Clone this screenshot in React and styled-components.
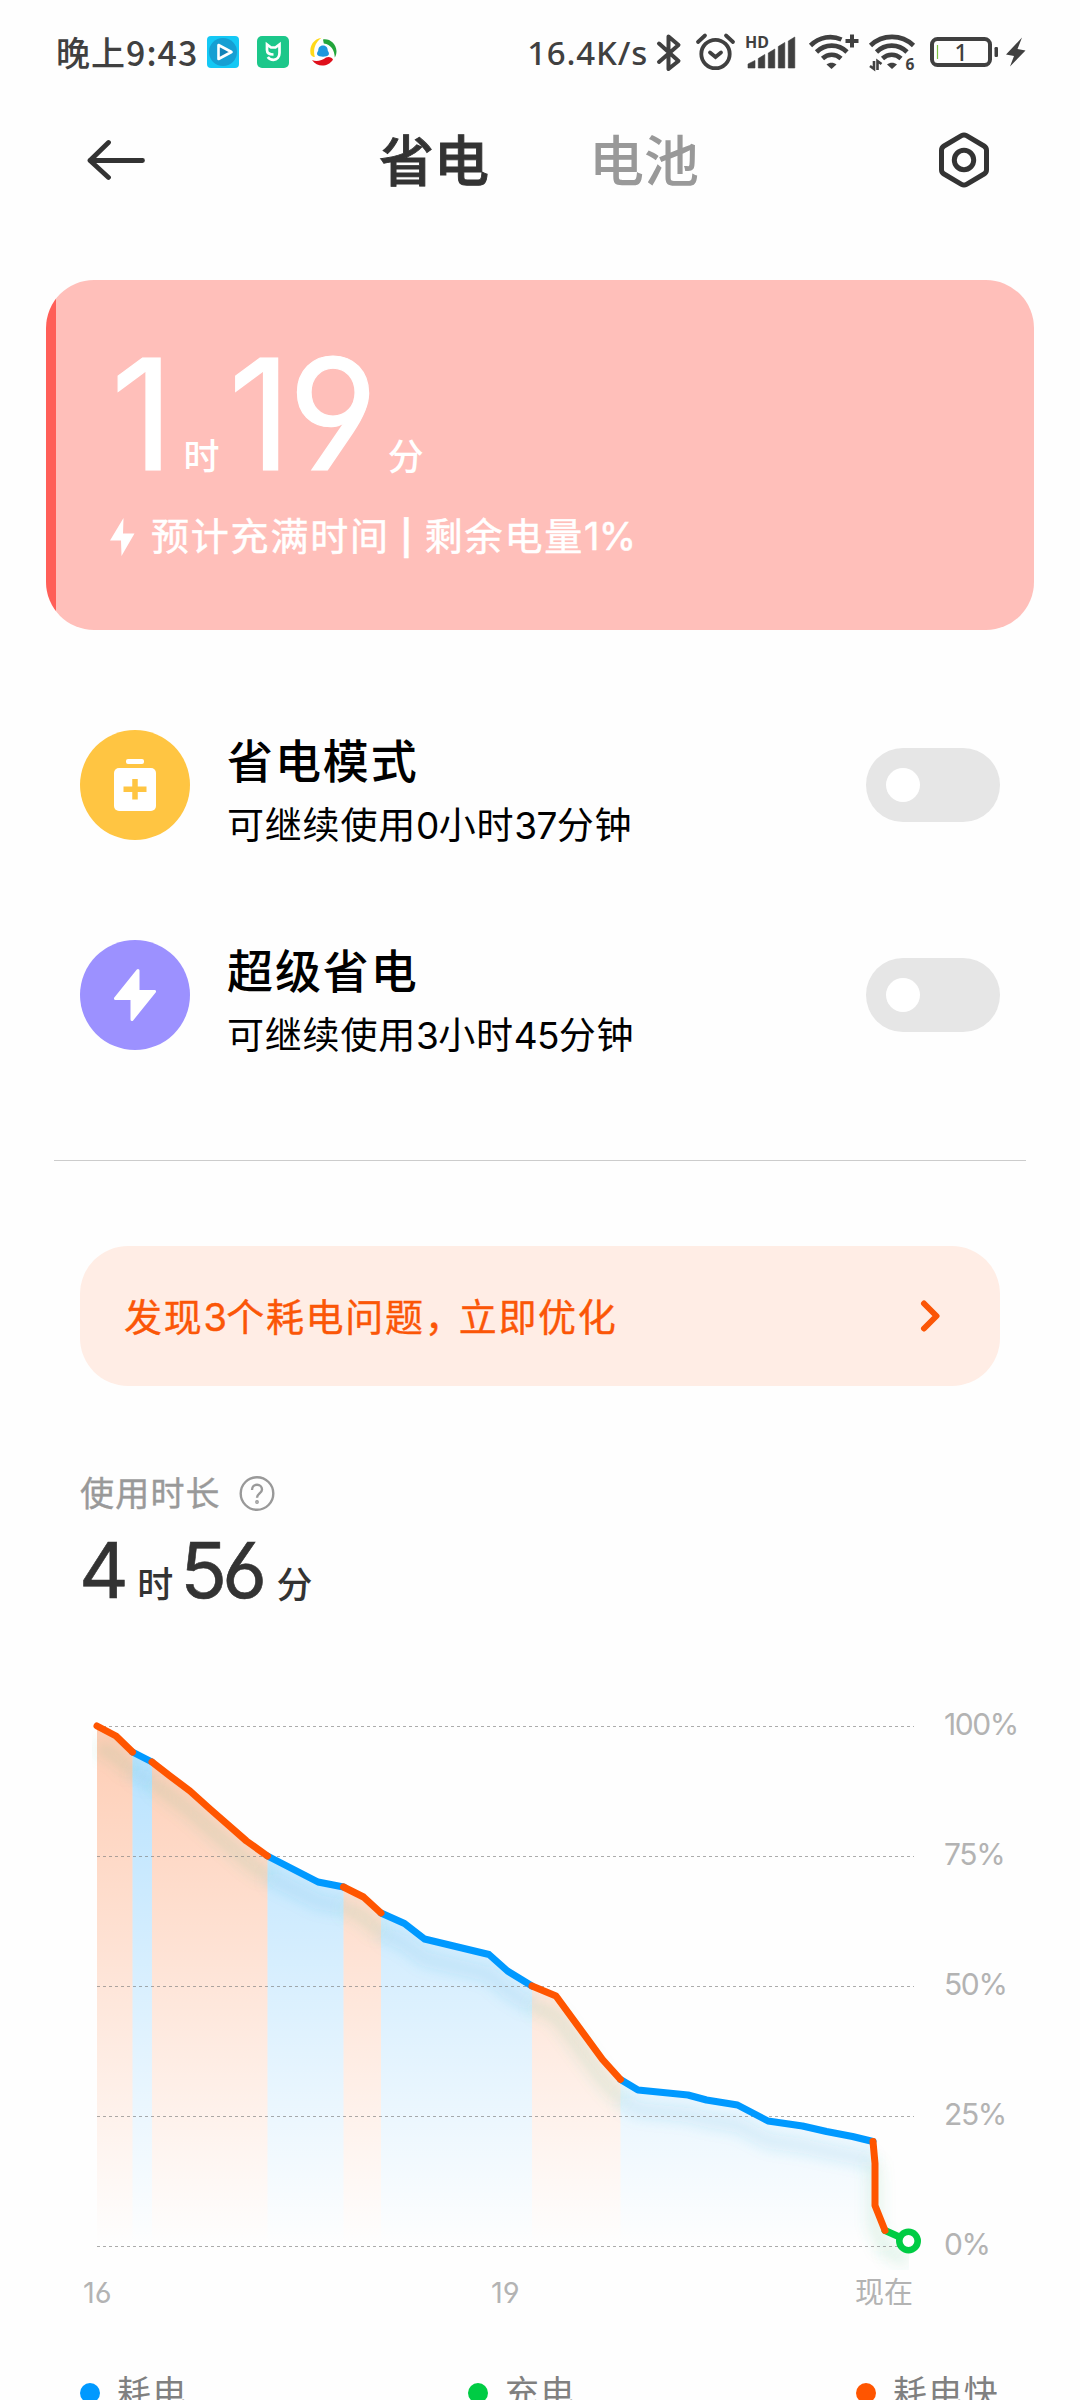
import React, { useState } from "react";
import styled, { createGlobalStyle } from "styled-components";

const GlobalStyle = createGlobalStyle`
  * {
    box-sizing: border-box;
  }

  body {
    margin: 0;
    background: #fefefe;
  }
`;

const Page = styled.div`
  width: 1080px;
  height: 2400px;
  overflow: hidden;
  background: #fefefe;
  color: #000;
  font-family: Inter, "Noto Sans CJK SC", sans-serif;
  font-feature-settings: "cv03", "cv04";
  white-space: nowrap;
`;

/* status bar */

const StatusBar = styled.div`
  display: flex;
  justify-content: space-between;
  align-items: center;
  height: 106px;
  padding: 0 54px 0 56px;
  color: #404040;
  font-family: "Noto Sans CJK SC", sans-serif;
  font-size: 34px;
  font-weight: 500;
  line-height: 40px;
`;

const StatusGroup = styled.div`
  display: flex;
  align-items: center;
`;

const Clock = styled.span`
  width: 151px;
  margin-top: -3px;
  letter-spacing: 1px;
`;

const NetSpeed = styled.span`
  font-family: "Noto Sans", sans-serif;
  font-size: 33px;
  letter-spacing: 0.8px;
`;

const AppIcon = styled.svg`
  width: 32px;
  height: 32px;
  margin: -2px 18px 0 0;
`;

const StatusIcon = styled.svg`
  width: ${(p) => p.$width}px;
  height: 40px;
  margin-left: ${(p) => p.$gap}px;
  overflow: visible;
`;

/* header */

const Header = styled.header`
  display: flex;
  justify-content: space-between;
  align-items: center;
  height: 108px;
  padding: 0 91px 0 87px;
`;

const Tabs = styled.nav`
  display: flex;
  gap: 100px;
  margin: 2px 6px 0 0;
`;

const Tab = styled.span`
  color: ${(p) => (p.$active ? "#333" : "#999")};
  font-size: 55px;
  font-weight: 500;
  line-height: 64px;
  -webkit-text-stroke: ${(p) => (p.$active ? 0.9 : 0)}px currentColor;
`;

/* battery card */

const BatteryCard = styled.section`
  height: 350px;
  margin: 66px 46px 0;
  padding: 57px 0 0 65px;
  border-radius: 48px;
  background: linear-gradient(to right, #ff5f58 10px, #ffbfba 10px);
  color: #fff;
`;

const TimeRow = styled.div`
  display: flex;
  align-items: baseline;
  height: ${(p) => p.$size}px;
`;

const BigNumber = styled.span`
  font-size: ${(p) => p.$size}px;
  font-weight: 400;
  line-height: 1;
  letter-spacing: ${(p) => p.$tracking}em;
  -webkit-text-stroke: ${(p) => p.$size / 130}px currentColor;
`;

const Unit = styled.span`
  margin: 0 ${(p) => p.$after || 0}px 0 ${(p) => p.$before}px;
  font-size: 36px;
  font-weight: 500;
  line-height: 1;
`;

const CardNote = styled.div`
  display: flex;
  align-items: center;
  gap: 16px;
  margin: 21px 0 0 -1px;
  font-size: 38px;
  line-height: 48px;
  letter-spacing: 1.8px;
  word-spacing: -2px;
  -webkit-text-stroke: 0.5px currentColor;
`;

const Bar = styled.span`
  font-size: 34px;
  font-weight: 600;
`;

/* latin digits sit tighter than the hanzi around them */
const Num = styled.span`
  letter-spacing: -0.7px;
`;

/* saving modes */

const ModeList = styled.div`
  display: flex;
  flex-direction: column;
  gap: 100px;
  padding: 100px 80px 110px;
`;

const ModeRow = styled.div`
  display: flex;
  align-items: center;
  height: 110px;
`;

const ModeIcon = styled.div`
  display: flex;
  align-items: center;
  justify-content: center;
  width: 110px;
  height: 110px;
  border-radius: 50%;
  background: ${(p) => p.$color};
`;

const ModeText = styled.div`
  flex: 1;
  padding: 9px 0 0 37px;
`;

const ModeTitle = styled.div`
  font-size: 46px;
  font-weight: 500;
  line-height: 64px;
  letter-spacing: 1.9px;
`;

const ModeHint = styled.div`
  margin-top: 9px;
  font-size: 37px;
  line-height: 48px;
  letter-spacing: 0.8px;
`;

const Toggle = styled.button`
  display: flex;
  align-items: center;
  justify-content: ${(p) => (p.$on ? "flex-end" : "flex-start")};
  width: 134px;
  height: 74px;
  padding: 0 20px;
  border: 0;
  border-radius: 37px;
  background: ${(p) => (p.$on ? "#0d84ff" : "#e6e6e6")};
`;

const Knob = styled.span`
  width: 34px;
  height: 34px;
  border-radius: 50%;
  background: #fff;
`;

const Divider = styled.hr`
  height: 1px;
  margin: 0 54px;
  border: 0;
  background: #ccc;
`;

const Banner = styled.div`
  display: flex;
  align-items: center;
  justify-content: space-between;
  height: 140px;
  margin: 85px 80px 0;
  padding: 1px 59px 0 44px;
  border-radius: 48px;
  background: #ffede5;
  color: #fb5607;
  font-size: 38px;
  line-height: 48px;
  letter-spacing: 1.7px;
  -webkit-text-stroke: 0.4px currentColor;
`;

const Comma = styled.span`
  letter-spacing: -4px;
`;

/* usage */

const UsageLabel = styled.div`
  display: flex;
  align-items: center;
  gap: 18px;
  margin: 88px 0 18px 80px;
  color: #999;
  font-size: 34px;
  line-height: 40px;
  letter-spacing: 1.2px;
  -webkit-text-stroke: 0.4px currentColor;
`;

const UsageValue = styled.div`
  padding-left: 79px;
  color: #333;
`;

const ChartBox = styled.div`
  display: flex;
  margin: 90px 0 0 80px;
`;

const Scale = styled.div`
  display: flex;
  flex-direction: column;
  gap: 90px;
  padding: 4px 0 0 14px;
  color: #b3b3b3;
  font-size: 30px;
  line-height: 40px;
  letter-spacing: -1.4px;
`;

const Hours = styled.div`
  display: grid;
  grid-template-columns: 408px 364px auto;
  padding: 1px 0 0 83px;
  color: #b3b3b3;
  font-size: 29px;
  line-height: 44px;
`;

const Legend = styled.div`
  display: grid;
  grid-template-columns: repeat(3, 388px);
  margin: 54px 0 0 80px;
`;

const LegendItem = styled.div`
  display: flex;
  align-items: center;
  gap: 17px;
  color: #808080;
  font-size: 34px;
  line-height: 48px;
  letter-spacing: 1.4px;

  &::before {
    content: "";
    width: 20px;
    height: 20px;
    border-radius: 50%;
    background: ${(p) => p.$color};
  }
`;

const BLUE = "#0099ff";
const ORANGE = "#ff5500";
const GREEN = "#00cc44";

// every run starts where the previous one stopped
const runs = [
  { kind: "fast", points: [[97, 1726], [116, 1736], [132.5, 1752]] },
  { kind: "drain", points: [[132.5, 1752], [152, 1762]] },
  {
    kind: "fast",
    points: [[152, 1762], [170, 1776], [190, 1791], [210, 1809], [246.5, 1841], [267.5, 1856]],
  },
  { kind: "drain", points: [[267.5, 1856], [318, 1882], [343.5, 1887]] },
  { kind: "fast", points: [[343.5, 1887], [363.5, 1897], [381, 1913]] },
  {
    kind: "drain",
    points: [[381, 1913], [404.5, 1923.5], [424.5, 1939], [489, 1954.5], [507.5, 1971], [532, 1986]],
  },
  { kind: "fast", points: [[532, 1986], [556, 1996], [602.5, 2059.5], [620.5, 2079.5]] },
  {
    kind: "drain",
    points: [
      [620.5, 2079.5], [638, 2090], [688, 2095], [706.5, 2100], [737.5, 2105],
      [768, 2121], [802.5, 2126], [826.5, 2131.5], [852.5, 2136.5], [873, 2141.5],
    ],
  },
  { kind: "fast", points: [[873, 2141.5], [875, 2163.5], [875, 2205.5], [885, 2230.5]] },
  { kind: "charge", points: [[885, 2230.5], [908.5, 2241]] },
];

const colors = { fast: ORANGE, drain: BLUE, charge: GREEN };

const toPoints = (points) => points.map((p) => p.join(",")).join(" ");

const area = ({ points }) =>
  toPoints([[points[0][0], 2246], ...points, [points[points.length - 1][0], 2246]]);

const BatteryChart = () => (
  <svg width="850" height="570" viewBox="80 1700 850 570">
    <defs>
      {Object.keys(colors).map((kind) => (
        <linearGradient
          key={kind}
          id={kind}
          gradientUnits="userSpaceOnUse"
          x1="0"
          y1="1726"
          x2="0"
          y2="2246"
        >
          <stop offset="0" stopColor={colors[kind]} stopOpacity="0.29" />
          <stop offset="1" stopColor={colors[kind]} stopOpacity="0" />
        </linearGradient>
      ))}
      <filter id="glow" filterUnits="userSpaceOnUse" x="80" y="1700" width="850" height="570">
        <feGaussianBlur stdDeviation="7" />
      </filter>
      <clipPath id="plot">
        <rect x="92" y="1700" width="817" height="570" />
      </clipPath>
    </defs>
    {runs.map((run, i) => (
      <polygon key={i} points={area(run)} fill={`url(#${run.kind})`} />
    ))}
    <g clipPath="url(#plot)">
      {runs.map((run, i) => (
        <polyline
          key={i}
          points={toPoints(run.points)}
          transform="translate(0 20)"
          fill="none"
          stroke={run.kind === "drain" ? "#3aa5d8" : "#45b878"}
          strokeOpacity="0.14"
          strokeWidth="14"
          strokeLinejoin="round"
          filter="url(#glow)"
        />
      ))}
    </g>
    {[0, 1, 2, 3, 4].map((n) => (
      <line
        key={n}
        x1="97"
        x2="914"
        y1={1726.5 + n * 130}
        y2={1726.5 + n * 130}
        stroke="#808080"
        strokeOpacity="0.65"
        strokeDasharray="3 3"
      />
    ))}
    {["charge", "drain", "fast"].map((kind) =>
      runs
        .filter((run) => run.kind === kind)
        .map((run) => (
          <polyline
            key={run.points[0][0]}
            points={toPoints(run.points)}
            fill="none"
            stroke={colors[kind]}
            strokeWidth="7"
            strokeLinecap="round"
            strokeLinejoin="round"
          />
        ))
    )}
    <circle cx="908.5" cy="2241" r="9.2" fill="#fff" stroke={GREEN} strokeWidth="6.6" />
  </svg>
);

const PlayerIcon = () => (
  <AppIcon viewBox="0 0 32 32">
    <rect width="32" height="32" rx="4" fill="#14c8f5" />
    <circle cx="16" cy="16" r="14" fill="#169fd3" />
    <path d="M11.5 9v14l13-7z" fill="#1483b8" stroke="#fff" strokeWidth="2.6" strokeLinejoin="round" />
  </AppIcon>
);

const HomeIcon = () => (
  <AppIcon viewBox="0 0 32 32">
    <rect width="32" height="32" rx="5" fill="#1cc78a" />
    <path
      d="M16.5 18.500c-4.500 0-6.500-1.800-6.500-4.500V8.500l4 3h4.500l4-3V17c0 4-2.500 6.800-6 6.800-2.500 0-4.500-1-5.700-2.800"
      fill="none"
      stroke="#fff"
      strokeWidth="2.7"
    />
  </AppIcon>
);

const RingIcon = () => (
  <AppIcon viewBox="0 0 32 32">
    <path d="M14.500 1.800C7 3 2 9.500 3.500 18c.8 2 3 3.500 4.300 2.800C6 14 7.500 7 14.500 1.800z" fill="#ffd91a" />
    <path d="M16 3.500c6.500-1.200 13 4 13.500 11.500 0 3-.7 5-1.700 6.500C27.500 14 24 8.500 16.800 7.500z" fill="#22a53a" />
    <path d="M5 24c4 1.800 10 .8 14-2.500 3-1.500 6 0 7 2-4.500 7.500-15.500 8.500-21 .5z" fill="#df0f1b" />
    <path d="M16 9.500c3.300 0 4.800 2.300 4.800 5.200 1.300 1.800 1.500 3.500.7 4.300-1.500 2.300-9.500 2.300-11 0-.8-.8-.6-2.500.7-4.300 0-2.900 1.500-5.200 4.800-5.200z" fill="#1d97dd" />
  </AppIcon>
);

const StatusIcons = () => (
  <>
    <StatusIcon $width={24} $gap={9} viewBox="0 0 24 40" fill="none" stroke="currentColor" strokeWidth="4" strokeLinejoin="round" strokeLinecap="round">
      <path d="M2 10.500 21.500 28 11.500 36V3.500L21.500 12 2 29" />
    </StatusIcon>
    <StatusIcon $width={39} $gap={15} viewBox="0 0 39 40" fill="none" stroke="currentColor" strokeWidth="3.800" strokeLinecap="round">
      <circle cx="19.500" cy="21" r="14.200" />
      <path d="M14 19.500l5.500 4.500 5.500-4.500M2 9l7-6.500M37 9 30 2.500" />
    </StatusIcon>
    <StatusIcon $width={50} $gap={11} viewBox="0 0 50 40" fill="currentColor">
      <text x="-1" y="15" fontFamily="Noto Sans" fontSize="16" fontWeight="700">HD</text>
      <path d="M2 31l7-3.500V35H2zM12.300 25.500l6.500-4V35h-6.500zM22.300 20l6.500-4v19h-6.500zM32.300 13.500l6.500-4V35h-6.500zM42.300 8l6.500-4v31h-6.500z" stroke="currentColor" strokeWidth=".6" strokeLinejoin="round" />
    </StatusIcon>
    <StatusIcon $width={50} $gap={13} viewBox="0 0 50 40">
      <g fill="none" stroke="currentColor" strokeWidth="4.600">
        <path d="M1.500 12.500c9-8.800 21-10.500 31-6M7.500 19c8.500-8.500 22-8.500 30.500 0M13.500 25.500c5.500-5 13-5 18.500 0" />
        <path d="M43 1.500v13M36.500 8h13" strokeWidth="4" />
      </g>
      <path d="M17.500 31.500c3-2.500 7-2.500 10 0L22.500 36z" fill="currentColor" />
    </StatusIcon>
    <StatusIcon $width={46} $gap={10} viewBox="0 0 46 40">
      <g fill="none" stroke="currentColor" strokeWidth="4.600">
        <path d="M1.500 12.500c12-11.500 31-11.500 43 0M7.500 19c8.500-8.500 22-8.500 30.500 0M13.500 25.500c5.500-5 13-5 18.500 0" />
      </g>
      <path d="M18 31.500c3-2.500 7-2.500 10 0L23 36z" fill="currentColor" />
      <path d="M5 28v8l-4-3M8.500 37v-9l4 3" fill="none" stroke="currentColor" strokeWidth="2.600" />
      <text x="36.500" y="37" fill="currentColor" fontFamily="Noto Sans" fontSize="15.500" fontWeight="700">6</text>
    </StatusIcon>
    <StatusIcon $width={68} $gap={15} viewBox="0 0 68 40">
      <rect x="2" y="6" width="58" height="26" rx="5.500" fill="none" stroke="currentColor" strokeWidth="4" />
      <rect x="64.500" y="14" width="3.500" height="10" rx="1.200" fill="currentColor" />
      <path d="M7.500 12v14" stroke="#7cc242" strokeWidth="1.200" />
      <text x="31" y="27.500" textAnchor="middle" fill="currentColor" fontFamily="Noto Sans" fontSize="23">1</text>
    </StatusIcon>
    <StatusIcon $width={20} $gap={8} viewBox="0 0 20 40" fill="currentColor">
      <path d="M16 4.500 0 21.500l8 1.500-4 10.500L19.500 17.500 11.500 16z" />
    </StatusIcon>
  </>
);

const Mode = ({ icon, color, title, hours, minutes }) => {
  const [on, setOn] = useState(false);

  return (
    <ModeRow>
      <ModeIcon $color={color}>{icon}</ModeIcon>
      <ModeText>
        <ModeTitle>{title}</ModeTitle>
        <ModeHint>
          可继续使用<Num>{hours}</Num>小时<Num>{minutes}</Num>分钟
        </ModeHint>
      </ModeText>
      <Toggle $on={on} onClick={() => setOn(!on)}>
        <Knob />
      </Toggle>
    </ModeRow>
  );
};

const App = () => {
  const [tab, setTab] = useState("省电");

  return (
    <Page>
      <GlobalStyle />
      <StatusBar>
        <StatusGroup>
          <Clock>晚上9:43</Clock>
          <PlayerIcon />
          <HomeIcon />
          <RingIcon />
        </StatusGroup>
        <StatusGroup>
          <NetSpeed>16.4K/s</NetSpeed>
          <StatusIcons />
        </StatusGroup>
      </StatusBar>

      <Header>
        <svg width="58" height="42" viewBox="0 0 58 42" fill="none" stroke="#333" strokeWidth="4.800" strokeLinecap="round" strokeLinejoin="round">
          <path d="M55.500 21.500H3M21.500 3.500 3 21.500l18.500 17" />
        </svg>
        <Tabs>
          {["省电", "电池"].map((name) => (
            <Tab key={name} $active={tab === name} onClick={() => setTab(name)}>
              {name}
            </Tab>
          ))}
        </Tabs>
        <svg width="50" height="56" viewBox="0 0 50 56" fill="none" stroke="#333" strokeWidth="5">
          <path d="M22.500 3.700a5 5 0 0 1 5 0L45 14a5 5 0 0 1 2.500 4.300v19.400A5 5 0 0 1 45 42L27.500 52.300a5 5 0 0 1-5 0L5 42a5 5 0 0 1-2.500-4.300V18.300A5 5 0 0 1 5 14z" />
          <circle cx="25" cy="28" r="9.700" />
        </svg>
      </Header>

      <BatteryCard>
        <TimeRow $size={154}>
          <BigNumber $size={154} $tracking={-0.02}>1</BigNumber>
          <Unit $before={13} $after={9}>时</Unit>
          <BigNumber $size={154} $tracking={-0.02}>19</BigNumber>
          <Unit $before={13}>分</Unit>
        </TimeRow>
        <CardNote>
          <svg width="25" height="38" viewBox="0 0 25 38" fill="#fff">
            <path d="M13.500 0 0 22.500h11L11.500 38 24.500 15.500H13z" />
          </svg>
          <span>
            预计充满时间 <Bar>|</Bar> 剩余电量<Num>1%</Num>
          </span>
        </CardNote>
      </BatteryCard>

      <ModeList>
        <Mode
          color="#ffc542"
          title="省电模式"
          hours={0}
          minutes={37}
          icon={
            <svg width="42" height="52" viewBox="0 0 42 52">
              <rect x="12" y="0" width="18" height="5" rx="2" fill="#fff" />
              <rect x="0" y="9" width="42" height="43" rx="5" fill="#fff" />
              <path d="M21 20v20.500M9.500 30.200h23" stroke="#ffc542" strokeWidth="5.500" />
            </svg>
          }
        />
        <Mode
          color="#9c91ff"
          title="超级省电"
          hours={3}
          minutes={45}
          icon={
            <svg width="42" height="52" viewBox="0 0 42 52" fill="#fff" stroke="#fff" strokeWidth="3" strokeLinejoin="round">
              <path d="M24 1.500 1.500 29.500h16.500V50.500L40.500 22.500H24z" />
            </svg>
          }
        />
      </ModeList>

      <Divider />

      <Banner>
        <span>
          发现<Num>3</Num>个耗电问题<Comma>，</Comma>立即优化
        </span>
        <svg width="22" height="34" viewBox="0 0 22 34" fill="none" stroke="#fb5607" strokeWidth="6" strokeLinejoin="round" strokeLinecap="round">
          <path d="M5 3.500l12.500 12.500L5 28.500" />
        </svg>
      </Banner>

      <UsageLabel>
        使用时长
        <svg width="36" height="36" viewBox="0 0 36 36" fill="none" stroke="#999" strokeWidth="2.400">
          <circle cx="18" cy="17.500" r="16.300" />
          <path d="M13 14c0-3.300 2.200-5.200 5-5.200s5 1.800 5 4.600c0 3.800-5 4.300-5 8.300" />
          <circle cx="18" cy="26" r=".7" />
        </svg>
      </UsageLabel>
      <UsageValue>
        <TimeRow $size={78}>
          <BigNumber $size={77} $tracking={-0.06}>4</BigNumber>
          <Unit $before={13} $after={7}>时</Unit>
          <BigNumber $size={77} $tracking={-0.06}>56</BigNumber>
          <Unit $before={14}>分</Unit>
        </TimeRow>
      </UsageValue>

      <ChartBox>
        <BatteryChart />
        <Scale>
          {[100, 75, 50, 25, 0].map((n) => (
            <span key={n}>{n}%</span>
          ))}
        </Scale>
      </ChartBox>
      <Hours>
        <span>16</span>
        <span>19</span>
        <span>现在</span>
      </Hours>

      <Legend>
        <LegendItem $color={BLUE}>耗电</LegendItem>
        <LegendItem $color={GREEN}>充电</LegendItem>
        <LegendItem $color={ORANGE}>耗电快</LegendItem>
      </Legend>
    </Page>
  );
};

export default App;
